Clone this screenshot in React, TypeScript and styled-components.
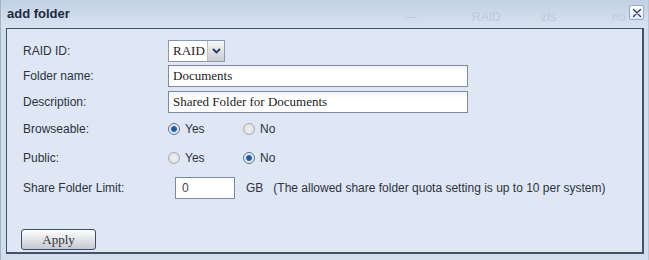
import styled, { createGlobalStyle } from "styled-components";

const GlobalStyle = createGlobalStyle`
  html, body {
    margin: 0;
    padding: 0;
    background: #d3deed;
  }
  * {
    box-sizing: border-box;
  }
`;

const ghostItems = [
  { text: "—", left: 404 },
  { text: "RAID", left: 471 },
  { text: "zfs", left: 540 },
  { text: "no", left: 611 },
];

const Radio = ({ checked, label }: { checked?: boolean; label: string }) => (
  <RadioOption>
    <RadioDot $checked={checked} />
    <span>{label}</span>
  </RadioOption>
);

const App = () => {
  return (
    <Window>
      <GlobalStyle />
      <TitleBar>
        <Title>add folder</Title>
        {ghostItems.map((item) => (
          <Ghost key={item.text} style={{ left: item.left }}>
            {item.text}
          </Ghost>
        ))}
        <CloseButton aria-label="close">
          <svg width="10" height="10" viewBox="0 0 10 10">
            <path
              d="M1.5 1.5 L8.5 8.5 M8.5 1.5 L1.5 8.5"
              stroke="#2a3c60"
              strokeWidth="1.4"
              strokeLinecap="round"
            />
          </svg>
        </CloseButton>
      </TitleBar>
      <Panel>
        <Form>
          <Row $h={25}>
            <Label>RAID ID:</Label>
            <Select>
              <SelectValue>RAID</SelectValue>
              <SelectArrow>
                <svg width="9" height="6" viewBox="0 0 9 6">
                  <path
                    d="M1 1 L4.5 4.5 L8 1"
                    fill="none"
                    stroke="#243a6e"
                    strokeWidth="1.8"
                  />
                </svg>
              </SelectArrow>
            </Select>
          </Row>
          <Row $h={26}>
            <Label>Folder name:</Label>
            <TextInput defaultValue="Documents" />
          </Row>
          <Row $h={26}>
            <Label>Description:</Label>
            <TextInput defaultValue="Shared Folder for Documents" />
          </Row>
          <Row $h={28}>
            <Label>Browseable:</Label>
            <RadioGroup>
              <Radio checked label="Yes" />
              <Radio label="No" />
            </RadioGroup>
          </Row>
          <Row $h={30}>
            <Label>Public:</Label>
            <RadioGroup>
              <Radio label="Yes" />
              <Radio checked label="No" />
            </RadioGroup>
          </Row>
          <Row $h={30}>
            <Label>Share Folder Limit:</Label>
            <LimitWrap>
              <LimitInput defaultValue="0" />
              <Unit>GB</Unit>
              <Hint>(The allowed share folder quota setting is up to 10 per system)</Hint>
            </LimitWrap>
          </Row>
        </Form>
        <Footer>
          <ApplyButton>Apply</ApplyButton>
        </Footer>
      </Panel>
    </Window>
  );
};

export default App;

const Window = styled.div`
  width: 649px;
  height: 260px;
  display: flex;
  flex-direction: column;
  background: #d3deed;
  border-left: 1px solid #a5b3c6;
  border-right: 1px solid #b9c6d8;
  font-family: "Liberation Sans", Arial, sans-serif;
  overflow: hidden;
`;

const TitleBar = styled.div`
  position: relative;
  height: 28px;
  flex: none;
  display: flex;
  align-items: center;
  padding-left: 6px;
  background: linear-gradient(#c2d0e4, #d9e3f1);
`;

const Title = styled.div`
  font-size: 13px;
  font-weight: bold;
  color: #1d2b3d;
  margin-top: -2px;
`;

const Ghost = styled.span`
  position: absolute;
  top: 10px;
  font-size: 12px;
  color: #bccadc;
`;

const CloseButton = styled.div`
  position: absolute;
  right: 4px;
  top: 5px;
  width: 15px;
  height: 15px;
  display: flex;
  align-items: center;
  justify-content: center;
  background: linear-gradient(#ffffff, #e6edf7);
  border: 1px solid #94a9c5;
  border-radius: 2px;
`;

const Panel = styled.div`
  margin: 0 4px 0 5px;
  height: 226px;
  flex: none;
  display: flex;
  flex-direction: column;
  background: #dfe7f5;
  border: 1px solid #435267;
  border-right-width: 2px;
  border-bottom-width: 2px;
  padding: 9px 0 0 16px;
`;

const Form = styled.div`
  display: flex;
  flex-direction: column;
`;

const Row = styled.div<{ $h: number }>`
  height: ${({ $h }) => $h}px;
  display: flex;
  align-items: center;
`;

const Label = styled.div`
  width: 145px;
  flex: none;
  font-size: 12px;
  color: #2c333d;
`;

const Select = styled.div`
  display: flex;
  height: 22px;
  border: 1px solid #8a98aa;
  background: #ffffff;
`;

const SelectValue = styled.div`
  width: 38px;
  display: flex;
  align-items: center;
  padding-left: 4px;
  font-family: "Liberation Serif", "Times New Roman", serif;
  font-size: 13px;
  color: #222;
`;

const SelectArrow = styled.div`
  width: 17px;
  display: flex;
  align-items: center;
  justify-content: center;
  border-left: 1px solid #b9bfc8;
  background: linear-gradient(#f7f7f7, #c9ccd1);
`;

const TextInput = styled.input`
  width: 300px;
  height: 22px;
  border: 1px solid #7b8a9c;
  background: linear-gradient(#f1f3f6, #ffffff 6px);
  padding: 0 4px;
  font-family: "Liberation Serif", "Times New Roman", serif;
  font-size: 13px;
  color: #222;
  outline: none;
`;

const RadioGroup = styled.div`
  display: flex;
`;

const RadioOption = styled.label`
  width: 75px;
  display: flex;
  align-items: center;
  gap: 5px;
  font-size: 12px;
  color: #2c333d;
`;

const RadioDot = styled.span<{ $checked?: boolean }>`
  width: 12px;
  height: 12px;
  border-radius: 50%;
  border: 1px solid ${({ $checked }) => ($checked ? "#5d7391" : "#a7adb6")};
  background: ${({ $checked }) =>
    $checked
      ? "radial-gradient(circle, #1a4f8c 0, #2b67aa 2.5px, #dfe6ef 3.5px, #f3f5f8 100%)"
      : "radial-gradient(circle, #f4f4f4 0, #e3e3e3 60%, #cfcfcf 100%)"};
`;

const LimitWrap = styled.div`
  display: flex;
  align-items: center;
  padding-left: 7px;
  font-size: 12px;
  color: #2c333d;
`;

const LimitInput = styled.input`
  width: 60px;
  height: 22px;
  border: 1px solid #7b8a9c;
  background: #ffffff;
  padding: 0 6px;
  font-family: "Liberation Sans", Arial, sans-serif;
  font-size: 12px;
  color: #444;
  outline: none;
`;

const Unit = styled.span`
  margin-left: 11px;
`;

const Hint = styled.span`
  margin-left: 10px;
`;

const Footer = styled.div`
  margin-top: auto;
  margin-left: -2px;
  padding-bottom: 2px;
`;

const ApplyButton = styled.button`
  width: 75px;
  height: 21px;
  border: 1px solid #3d4d63;
  border-radius: 3px;
  background: linear-gradient(#ffffff, #e4e6ea 45%, #c5c9d0);
  font-family: "Liberation Serif", "Times New Roman", serif;
  font-size: 13px;
  color: #333;
  padding: 0;
`;
